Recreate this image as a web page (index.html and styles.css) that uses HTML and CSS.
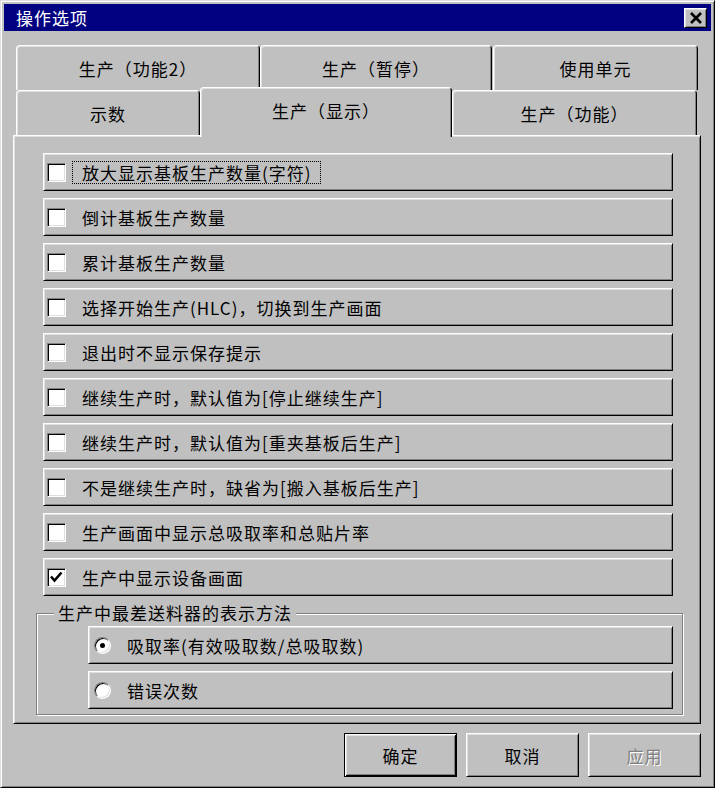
FILE: index.html
```html
<!DOCTYPE html>
<html lang="zh-CN">

<head>
    <meta charset="UTF-8">
    <title>操作选项</title>
    <link rel="stylesheet" href="styles.css">
</head>

<body>
    <div class="window">
        <div class="titlebar">
            <span class="title">操作选项</span>
            <span class="close">
                <svg width="14" height="12" viewBox="0 0 14 12">
                    <path d="M2 1 L12 11 M12 1 L2 11" stroke="#000" stroke-width="2.6" fill="none" />
                </svg>
            </span>
        </div>

        <div class="tabs">
            <div class="tabrow">
                <div class="tab w244">生产（功能2）</div>
                <div class="tab w232">生产（暂停）</div>
                <div class="tab w205">使用单元</div>
            </div>
            <div class="tabrow">
                <div class="tab w184">示数</div>
                <div class="tab w252 active">生产（显示）</div>
                <div class="tab w245">生产（功能）</div>
            </div>

            <div class="panel">
                <div class="opt"><span class="box"></span><span class="focus">放大显示基板生产数量(字符)</span></div>
                <div class="opt"><span class="box"></span>倒计基板生产数量</div>
                <div class="opt"><span class="box"></span>累计基板生产数量</div>
                <div class="opt"><span class="box"></span>选择开始生产(HLC)，切换到生产画面</div>
                <div class="opt"><span class="box"></span>退出时不显示保存提示</div>
                <div class="opt"><span class="box"></span>继续生产时，默认值为[停止继续生产]</div>
                <div class="opt"><span class="box"></span>继续生产时，默认值为[重夹基板后生产]</div>
                <div class="opt"><span class="box"></span>不是继续生产时，缺省为[搬入基板后生产]</div>
                <div class="opt"><span class="box"></span>生产画面中显示总吸取率和总贴片率</div>
                <div class="opt last">
                    <span class="box">
                        <svg width="17" height="17" viewBox="0 0 17 17">
                            <path d="M3 7.5 L6.5 11.5 L13.5 3.5" stroke="#000" stroke-width="2.6" fill="none" />
                        </svg>
                    </span>生产中显示设备画面
                </div>

                <fieldset class="group">
                    <legend>生产中最差送料器的表示方法</legend>
                    <div class="group-body">
                        <div class="opt radio-opt"><span class="radio on"></span>吸取率(有效吸取数/总吸取数)</div>
                        <div class="opt radio-opt last"><span class="radio"></span>错误次数</div>
                    </div>
                </fieldset>
            </div>
        </div>

        <div class="actions">
            <button class="btn default">确定</button>
            <button class="btn">取消</button>
            <button class="btn disabled">应用</button>
        </div>
    </div>
</body>

</html>
```

FILE: styles.css
```css
* {
    box-sizing: border-box;
}

body {
    margin: 0;
    background-color: #c0c0c0;
    font-family: "Noto Sans CJK SC", "Liberation Sans", sans-serif;
    font-size: 17px;
    letter-spacing: 1px;
    color: #000;
}

/* raised 3d edge used by window, tabs, rows and buttons */
.window,
.panel,
.opt,
.btn,
.close {
    border: 1px solid;
    border-color: #fff #000 #000 #fff;
    box-shadow: inset 1px 1px #dfdfdf, inset -1px -1px #808080;
}

.window {
    width: 715px;
    height: 788px;
    padding: 3px;
    border-color: #dfdfdf #000 #000 #dfdfdf;
    box-shadow: inset 1px 1px #fff, inset -1px -1px #808080;
}

.titlebar {
    height: 27px;
    background-color: #000080;
    color: #fff;
    display: flex;
    align-items: center;
    justify-content: space-between;
    padding: 0 4px 0 12px;
}

.close {
    width: 23px;
    height: 20px;
    background-color: #c0c0c0;
    display: flex;
    align-items: center;
    justify-content: center;
}

.tabs {
    margin: 14px 10px 0 9px;
}

.tabrow {
    display: flex;
    height: 45px;
    padding-left: 3px;
}

.tab {
    height: 45px;
    border: 1px solid;
    border-bottom: none;
    border-color: #fff #000 transparent #fff;
    border-radius: 4px 4px 0 0;
    box-shadow: inset 1px 1px #dfdfdf, inset -1px 0 #808080;
    background-color: #c0c0c0;
    display: flex;
    align-items: center;
    justify-content: center;
    white-space: nowrap;
}

.tab.active {
    position: relative;
    z-index: 1;
    height: 50px;
    margin-top: -3px;
    padding-bottom: 4px;
}

.w244 { width: 244px; }
.w232 { width: 232px; }
.w205 { width: 205px; margin-left: 1px; }
.w184 { width: 184px; }
.w252 { width: 252px; }
.w245 { width: 245px; }

.panel {
    height: 589px;
    padding: 17px 27px 0 29px;
}

.opt {
    height: 38px;
    margin-bottom: 7px;
    display: flex;
    align-items: center;
    padding-left: 3px;
    white-space: nowrap;
}

.opt.last {
    margin-bottom: 0;
}

.box {
    flex: none;
    width: 19px;
    height: 19px;
    margin-right: 16px;
    background-color: #fff;
    border: 1px solid;
    border-color: #808080 #fff #fff #808080;
    box-shadow: inset 1px 1px #000, inset -1px -1px #dfdfdf;
    display: flex;
    align-items: center;
    justify-content: center;
}

.focus {
    border: 1px dotted #000;
    margin-left: -10px;
    padding: 0 8px 0 9px;
    line-height: 21px;
}

.group {
    margin: 7px -10px 0 -7px;
    padding: 0;
    min-width: 0;
    border: 1px solid #808080;
    box-shadow: inset 1px 1px #fff, 1px 1px #fff;
}

.group legend {
    margin-left: 17px;
    padding: 0 4px;
    line-height: 20px;
    background-color: #c0c0c0;
}

.group-body {
    padding: 3px 9px 5px 51px;
}

.radio-opt {
    padding-left: 5px;
}

.radio {
    flex: none;
    position: relative;
    width: 17px;
    height: 17px;
    margin-right: 16px;
    border-radius: 50%;
    background-color: #fff;
    border: 1px solid;
    border-color: #808080 #fff #fff #808080;
    box-shadow: inset 1px 1px #000, inset -1px -1px #dfdfdf;
}

.radio.on::after {
    content: "";
    position: absolute;
    left: 5px;
    top: 5px;
    width: 5px;
    height: 5px;
    border-radius: 50%;
    background-color: #000;
}

.actions {
    display: flex;
    justify-content: flex-end;
    gap: 9px;
    margin: 9px 10px 0 0;
}

.btn {
    width: 113px;
    height: 44px;
    padding: 0;
    background-color: #c0c0c0;
    font: inherit;
    letter-spacing: inherit;
    color: #000;
}

.btn.default {
    border-color: #000;
    box-shadow: inset 1px 1px #fff, inset -1px -1px #000, inset 2px 2px #dfdfdf, inset -2px -2px #808080;
}

.btn.disabled {
    color: #808080;
    text-shadow: 1px 1px #fff;
}
```
